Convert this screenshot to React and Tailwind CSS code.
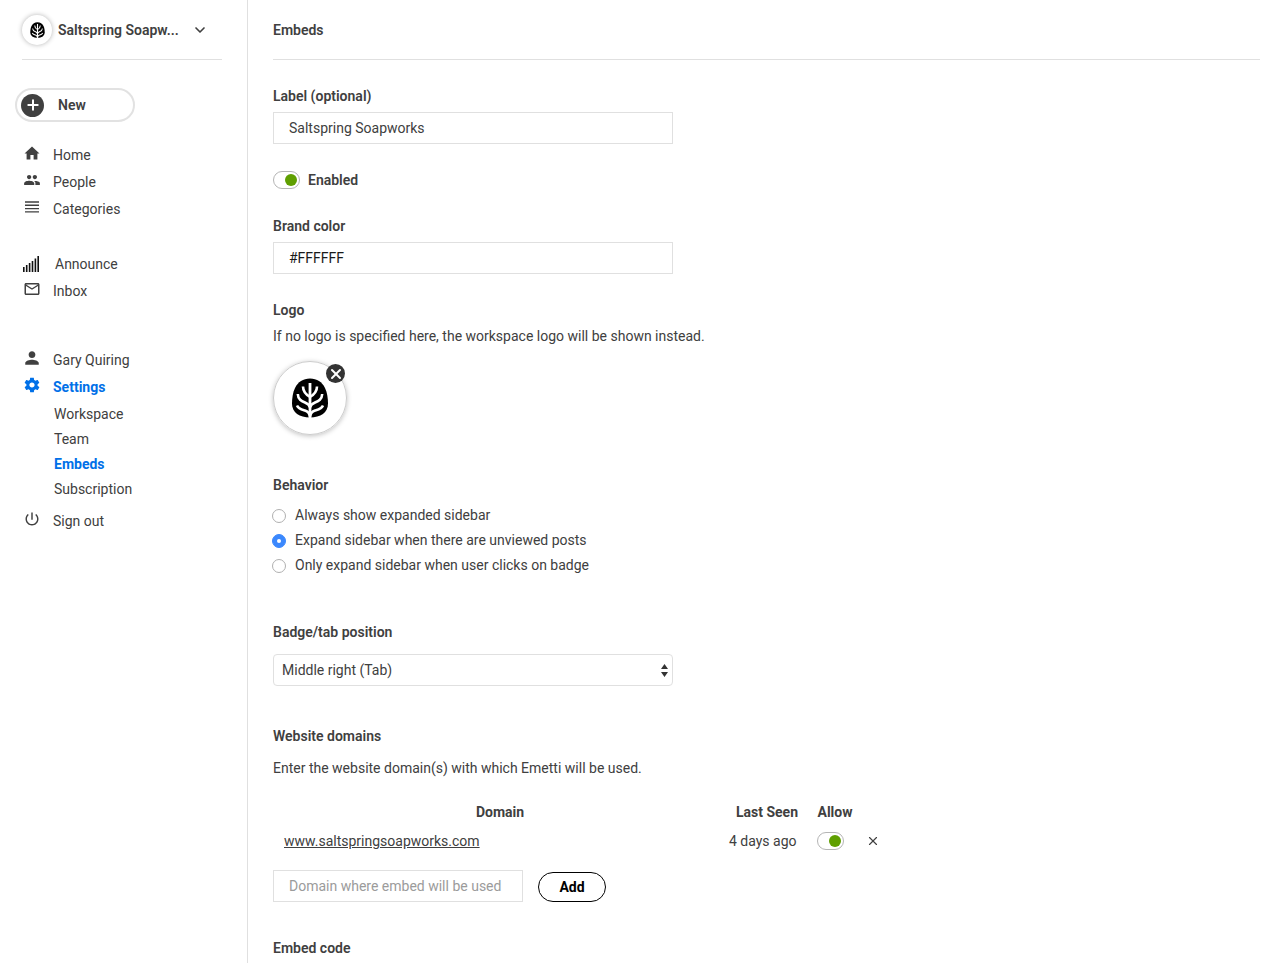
import { useState } from 'react'
import { IoMdPeople, IoMdPerson, IoMdSettings, IoMdPower } from 'react-icons/io'
import { MdMailOutline } from 'react-icons/md'
import { ChevronDown, Plus, X } from 'lucide-react'

const POSITIONS = ['Middle right (Tab)', 'Bottom right (Badge)', 'Bottom left (Badge)']

const BEHAVIORS = [
  { id: 'always', label: 'Always show expanded sidebar' },
  { id: 'unviewed', label: 'Expand sidebar when there are unviewed posts' },
  { id: 'click', label: 'Only expand sidebar when user clicks on badge' },
]

const SETTINGS_LINKS = ['Workspace', 'Team', 'Embeds', 'Subscription']

// Leaf mark of the workspace
function LeafLogo({ className }) {
  return (
    <svg viewBox="0 0 36 40" className={className} aria-hidden="true">
      <path
        d="M18 .5C25 .5 30 4 33 10C35.200 14.500 36 20 36 25.500C36 34.500 28.500 39.500 18 39.500S0 34.500 0 25.500C0 20 .8 14.500 3 10C6 4 11 .5 18 .5Z"
        fill="#000"
      />
      <g fill="none" stroke="#fff" strokeWidth="2.600">
        <path d="M18 5V40" strokeWidth="2.800" />
        <path d="M11 8.500C11 13.500 13 16 18 19C23 16 25 13.500 25 8.500" />
        <path d="M5.800 16C6 21.500 9.500 23 13 24.500C16 25.800 17.500 27 18 29.500C18.500 27 20 25.800 23 24.500C26.500 23 30 21.500 30.200 16" />
        <path d="M5 27.500C6.500 31 9.500 31.500 13 32.500C16 33.500 17.500 35.500 18 38.500C18.500 35.500 20 33.500 23 32.500C26.500 31.500 29.500 31 31 27.500" />
      </g>
    </svg>
  )
}

function HomeIcon() {
  return (
    <svg viewBox="0 0 16 16" className="h-4 w-4" fill="currentColor" aria-hidden="true">
      <path d="M6.400 14.500V10H9.600V14.500H13.400V8.500H15.500L8 1.500L.5 8.500H2.600V14.500Z" />
    </svg>
  )
}

function LinesIcon() {
  return (
    <svg viewBox="0 0 14 12" className="h-3 w-[14px]" fill="currentColor" aria-hidden="true">
      <path d="M0 .3H14V1.700H0ZM0 3.600H14V5H0ZM0 6.900H14V8.300H0ZM0 10.200H14V11.600H0Z" />
    </svg>
  )
}

// Rising bars used for announcements
function BarsIcon() {
  return (
    <svg viewBox="0 0 16 16" className="h-4 w-4" fill="#111" aria-hidden="true">
      <rect x="0" y="11" width="1.600" height="5" />
      <rect x="2.900" y="9" width="1.600" height="7" />
      <rect x="5.800" y="7" width="1.600" height="9" />
      <rect x="8.700" y="5" width="1.600" height="11" />
      <rect x="11.600" y="2.500" width="1.600" height="13.500" />
      <rect x="14.400" y="0" width="1.600" height="16" />
    </svg>
  )
}

function Toggle({ id, label, checked, onChange }) {
  return (
    <input
      id={id}
      type="checkbox"
      role="switch"
      aria-label={label}
      checked={checked}
      onChange={(e) => onChange(e.target.checked)}
      className="flex h-[18px] w-[27px] shrink-0 cursor-pointer appearance-none items-center rounded-full border border-[#b5b5b5] bg-white px-[2px] before:h-3 before:w-3 before:rounded-full before:bg-[#aaa] checked:justify-end checked:before:bg-[#5f9f00]"
    />
  )
}

function NavItem({ icon, children, active }) {
  return (
    <a
      href="#"
      className={
        active
          ? 'flex h-[27px] items-center gap-3 font-bold text-[#0070e8]'
          : 'flex h-[27px] items-center gap-3 text-[#404040]'
      }
    >
      <span className="flex w-[18px] justify-center pb-1">{icon}</span>
      {children}
    </a>
  )
}

function Sidebar() {
  return (
    <aside className="w-[248px] shrink-0 border-r border-[#e0e0e0] pr-[25px]">
      <div className="ml-[22px] border-b border-[#e0e0e0]">
        <button type="button" className="flex h-[59px] items-center font-semibold">
          <span className="flex h-[30px] w-[30px] items-center justify-center rounded-full bg-white shadow-[0_0_5px_rgba(0,0,0,0.3)]">
            <LeafLogo className="h-4 w-[15px]" />
          </span>
          <span className="ml-[6px] w-[130px] text-left">Saltspring Soapw...</span>
          <ChevronDown className="ml-1 h-4 w-4" strokeWidth={2.5} />
        </button>
      </div>

      <button
        type="button"
        className="mt-7 ml-[15px] flex h-[34px] w-[120px] items-center gap-[14px] rounded-full border-2 border-[#e2e2e2] pl-1 font-semibold"
      >
        <span className="flex h-[23px] w-[23px] items-center justify-center rounded-full bg-[#404040] text-white">
          <Plus className="h-4 w-4" strokeWidth={3} />
        </span>
        New
      </button>

      <nav className="mt-[19px] ml-[23px]">
        <NavItem icon={<HomeIcon />}>Home</NavItem>
        <NavItem icon={<IoMdPeople className="h-[18px] w-[18px]" />}>People</NavItem>
        <NavItem icon={<LinesIcon />}>Categories</NavItem>

        <div className="mt-7">
          <a href="#" className="flex h-[27px] items-center gap-4">
            <BarsIcon />
            Announce
          </a>
          <NavItem icon={<MdMailOutline className="h-[18px] w-[18px]" />}>Inbox</NavItem>
        </div>

        <div className="mt-[42px]">
          <NavItem icon={<IoMdPerson className="h-[18px] w-[18px]" />}>Gary Quiring</NavItem>
          <NavItem active icon={<IoMdSettings className="h-[18px] w-[18px]" />}>
            Settings
          </NavItem>
          <ul className="mt-px ml-[31px]">
            {SETTINGS_LINKS.map((name) => (
              <li key={name} className="flex h-[25px] items-center">
                <a href="#" className={name === 'Embeds' ? 'font-bold text-[#0070e8]' : ''}>
                  {name}
                </a>
              </li>
            ))}
          </ul>
          <div className="mt-[6px]">
            <NavItem icon={<IoMdPower className="h-4 w-4" />}>Sign out</NavItem>
          </div>
        </div>
      </nav>
    </aside>
  )
}

function DomainTable({ allowed, onAllow }) {
  return (
    <table className="mt-6 table-fixed">
      <thead>
        <tr className="h-5 font-semibold">
          <th className="w-[454px]">Domain</th>
          <th className="w-[80px]">Last Seen</th>
          <th className="w-[56px]">Allow</th>
          <th className="w-[20px]" aria-label="Remove" />
        </tr>
      </thead>
      <tbody>
        <tr className="h-[38px]">
          <td className="pl-[11px]">
            <a href="#" className="underline">
              www.saltspringsoapworks.com
            </a>
          </td>
          <td className="pl-[2px]">4 days ago</td>
          <td className="pl-[10px]">
            <Toggle label="Allow www.saltspringsoapworks.com" checked={allowed} onChange={onAllow} />
          </td>
          <td>
            <button type="button" aria-label="Remove domain" className="ml-[3px] flex">
              <X className="h-[14px] w-[14px]" strokeWidth={2} />
            </button>
          </td>
        </tr>
      </tbody>
    </table>
  )
}

export default function App() {
  const [label, setLabel] = useState('Saltspring Soapworks')
  const [enabled, setEnabled] = useState(true)
  const [color, setColor] = useState('#FFFFFF')
  const [behavior, setBehavior] = useState('unviewed')
  const [position, setPosition] = useState(POSITIONS[0])
  const [allowed, setAllowed] = useState(true)
  const [domain, setDomain] = useState('')

  return (
    <div className="flex min-h-screen bg-white font-[Roboto,'Liberation_Sans',sans-serif] text-sm text-[#404040]">
      <Sidebar />

      <main className="min-w-0 flex-1 pr-6 pl-[25px]">
        <h1 className="flex h-[60px] items-center border-b border-[#e0e0e0] font-semibold">Embeds</h1>

        <label htmlFor="label" className="mt-[26px] block font-semibold">
          Label (optional)
        </label>
        <input
          id="label"
          type="text"
          value={label}
          onChange={(e) => setLabel(e.target.value)}
          className="mt-[6px] block h-8 w-full max-w-[400px] border border-[#e0e0e0] px-[15px]"
        />

        <div className="mt-[26px] flex h-5 items-center gap-2">
          <Toggle id="enabled" checked={enabled} onChange={setEnabled} />
          <label htmlFor="enabled" className="font-semibold">
            Enabled
          </label>
        </div>

        <label htmlFor="color" className="mt-[26px] block font-semibold">
          Brand color
        </label>
        <input
          id="color"
          type="text"
          value={color}
          onChange={(e) => setColor(e.target.value)}
          className="mt-[6px] block h-8 w-full max-w-[400px] border border-[#e0e0e0] px-[15px] text-[#1a1a1a]"
        />

        <h2 className="mt-[26px] font-semibold">Logo</h2>
        <p className="mt-[6px]">If no logo is specified here, the workspace logo will be shown instead.</p>
        <div className="relative mt-[15px] flex h-[74px] w-[74px] items-center justify-center rounded-full border border-[#ccc] shadow-[0_1px_5px_rgba(0,0,0,0.25)]">
          <LeafLogo className="h-10 w-9" />
          <button
            type="button"
            aria-label="Remove logo"
            className="absolute top-[2px] right-px flex h-[19px] w-[19px] items-center justify-center rounded-full bg-[#333] text-white"
          >
            <X className="h-4 w-4" strokeWidth={3} />
          </button>
        </div>

        <fieldset className="mt-10">
          <legend className="font-semibold">Behavior</legend>
          <div className="mt-[7px]">
            {BEHAVIORS.map((item) => (
              <label key={item.id} className="-ml-px flex h-[25px] items-center gap-[9px]">
                <input
                  type="radio"
                  name="behavior"
                  checked={behavior === item.id}
                  onChange={() => setBehavior(item.id)}
                  className="mt-[2px] flex h-[14px] w-[14px] appearance-none items-center justify-center rounded-full border border-[#b0b0b0] bg-white checked:border-[#3b88fd] checked:bg-[#3b88fd] checked:before:h-1 checked:before:w-1 checked:before:rounded-full checked:before:bg-white"
                />
                {item.label}
              </label>
            ))}
          </div>
        </fieldset>

        <label htmlFor="position" className="mt-[45px] block font-semibold">
          Badge/tab position
        </label>
        <div className="relative mt-3 max-w-[400px]">
          <select
            id="position"
            value={position}
            onChange={(e) => setPosition(e.target.value)}
            className="block h-8 w-full appearance-none rounded border border-[#e0e0e0] bg-white px-2"
          >
            {POSITIONS.map((name) => (
              <option key={name}>{name}</option>
            ))}
          </select>
          <svg
            viewBox="0 0 7 13"
            className="pointer-events-none absolute top-[10px] right-[5px] h-[13px] w-[7px]"
            fill="#333"
            aria-hidden="true"
          >
            <path d="M3.500 0L7 5H0ZM0 8H7L3.500 13Z" />
          </svg>
        </div>

        <h2 className="mt-10 font-semibold">Website domains</h2>
        <p className="mt-3">Enter the website domain(s) with which Emetti will be used.</p>
        <DomainTable allowed={allowed} onAllow={setAllowed} />

        <form className="mt-[10px] flex items-end gap-[15px]" onSubmit={(e) => e.preventDefault()}>
          <input
            type="text"
            aria-label="Domain"
            placeholder="Domain where embed will be used"
            value={domain}
            onChange={(e) => setDomain(e.target.value)}
            className="h-8 w-[250px] border border-[#e0e0e0] px-[15px] placeholder:text-[#9b9b9b]"
          />
          <button type="submit" className="h-[30px] w-[68px] rounded-full border border-black font-bold text-black">
            Add
          </button>
        </form>

        <h2 className="mt-9 font-semibold">Embed code</h2>
      </main>
    </div>
  )
}
